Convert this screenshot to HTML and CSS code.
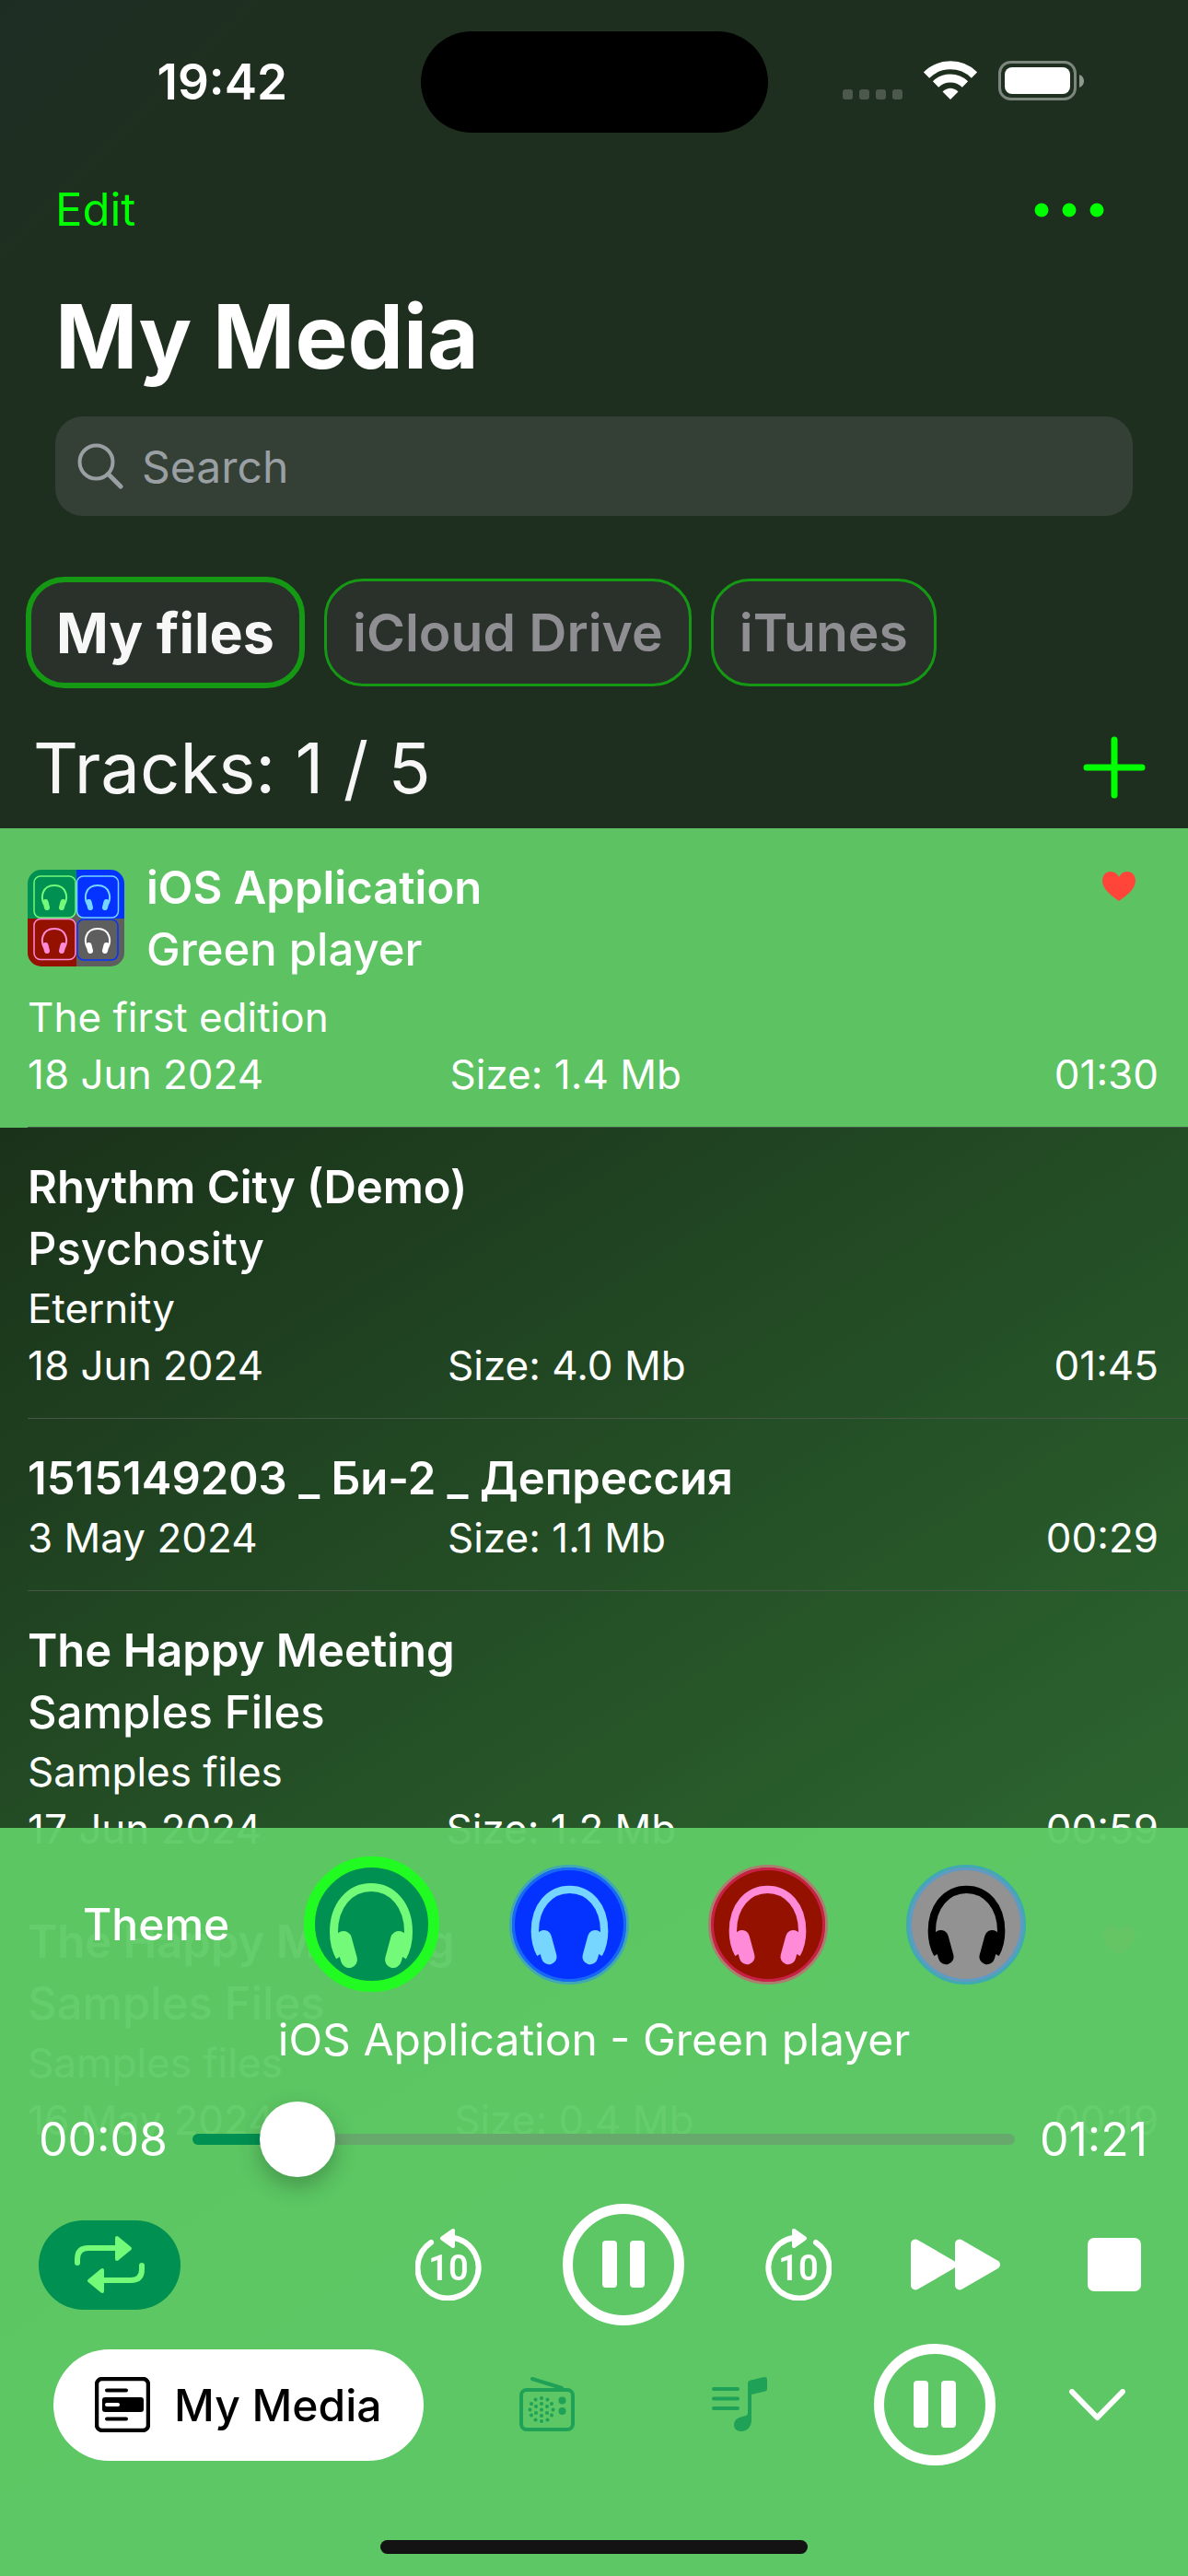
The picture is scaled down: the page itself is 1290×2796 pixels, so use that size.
FILE: index.html
```html
<!DOCTYPE html>
<html lang="en">
<head>
  <meta charset="UTF-8" />
  <meta name="viewport" content="width=device-width, initial-scale=1.0"/>
  <title>My Media</title>
  <link rel="stylesheet" href="styles.css">
</head>
<body>
  <!-- shared icons -->
  <svg class="sprite" aria-hidden="true">
    <symbol id="headphones" viewBox="-50 -50 100 100">
      <path d="M-34 35C-39 26-40.500 17-40.500 8C-40.500-21-23-40.500 0-40.500S40.500-21 40.500 8C40.500 17 39 26 34 35" fill="none" stroke="currentColor" stroke-width="9"/>
      <path d="M-30 16L-24 38M30 16L24 38" fill="none" stroke="currentColor" stroke-width="18" stroke-linecap="round"/>
    </symbol>
    <symbol id="phones-thin" viewBox="-15 -15 30 30">
      <path d="M-11 8C-15 1-14-13 0-13S15 1 11 8" fill="none" stroke="currentColor" stroke-width="2"/>
      <path d="M-9.500 5L-8 11M9.500 5L8 11" fill="none" stroke="currentColor" stroke-width="6" stroke-linecap="round"/>
    </symbol>
    <symbol id="heart" viewBox="0 0 36 33">
      <path d="M18 32C8 25 0 18 0 10C0 4 4 0 9 0C13 0 16 2 18 6C20 2 23 0 27 0C32 0 36 4 36 10C36 18 28 25 18 32Z" fill="currentColor"/>
    </symbol>
    <symbol id="pause" viewBox="0 0 132 132">
      <circle cx="66" cy="66" r="60.500" fill="none" stroke="currentColor" stroke-width="11"/>
      <rect x="43" y="40" width="16" height="51" rx="4" fill="currentColor"/>
      <rect x="73" y="40" width="16" height="51" rx="4" fill="currentColor"/>
    </symbol>
  </svg>

  <header class="header">
    <div class="status-bar">
      <span class="time">19:42</span>
      <span class="island"></span>
      <span class="status-icons">
        <svg width="65" height="43" viewBox="0 0 65 43" aria-hidden="true">
          <g fill="#fff" fill-opacity=".2">
            <rect x="0" y="31" width="11" height="11" rx="3"/>
            <rect x="18" y="31" width="11" height="11" rx="3"/>
            <rect x="36" y="31" width="11" height="11" rx="3"/>
            <rect x="54" y="31" width="11" height="11" rx="3"/>
          </g>
        </svg>
        <svg width="58" height="43" viewBox="0 0 58 43" aria-hidden="true">
          <path d="M3 15.500A37 37 0 0 1 55 15.500" fill="none" stroke="#fff" stroke-width="9"/>
          <path d="M13 25.500A23 23 0 0 1 45 25.500" fill="none" stroke="#fff" stroke-width="9"/>
          <path d="M20.500 33.500Q29 26 37.500 33.500L29 42Z" fill="#fff"/>
        </svg>
        <svg width="93" height="43" viewBox="0 0 93 43" aria-hidden="true">
          <rect x="1.500" y="1.500" width="82" height="40" rx="12" fill="none" stroke="#fff" stroke-opacity=".42" stroke-width="3"/>
          <rect x="7" y="7" width="71" height="29" rx="8" fill="#fff"/>
          <path d="M88 15Q93 17 93 22T88 29Z" fill="#fff" fill-opacity=".5"/>
        </svg>
      </span>
    </div>

    <div class="nav">
      <button class="edit">Edit</button>
      <button class="more" aria-label="More">
        <svg width="76" height="16" viewBox="0 0 76 16"><g fill="currentColor"><circle cx="8" cy="8" r="7.500"/><circle cx="38" cy="8" r="7.500"/><circle cx="68" cy="8" r="7.500"/></g></svg>
      </button>
    </div>

    <h1>My Media</h1>

    <label class="search">
      <svg width="50" height="50" viewBox="0 0 50 50" aria-hidden="true"><g fill="none" stroke="currentColor" stroke-width="4"><circle cx="20.500" cy="20.500" r="18"/><path d="M33.500 33.500L47 47" stroke-width="5" stroke-linecap="round"/></g></svg>
      <input type="search" placeholder="Search" aria-label="Search">
    </label>

    <div class="chips">
      <button class="chip active">My files</button>
      <button class="chip">iCloud Drive</button>
      <button class="chip">iTunes</button>
    </div>

    <div class="tracks-bar">
      <h2>Tracks: 1 / 5</h2>
      <button class="add" aria-label="Add">
        <svg width="68" height="68" viewBox="0 0 68 68"><path d="M34 4V64M4 34H64" stroke="currentColor" stroke-width="7" stroke-linecap="round"/></svg>
      </button>
    </div>
  </header>

  <ul class="tracks">
    <li class="track playing">
      <div class="track-head">
        <svg class="art" viewBox="0 0 105 105" aria-hidden="true">
          <rect width="53" height="53" fill="#009051"/>
          <rect x="53" width="52" height="53" fill="#0433ff"/>
          <rect y="53" width="53" height="52" fill="#941100"/>
          <rect x="53" y="53" width="52" height="52" fill="#5e5e5e"/>
          <path d="M47 53L53 47L59 53L53 59Z" fill="#5e5e5e"/>
          <g fill="none" stroke-width="1.500">
            <rect x="7" y="7" width="45" height="45" rx="7" fill="#009051" stroke="#73fa79"/>
            <rect x="53.500" y="7" width="45" height="45" rx="7" fill="#0433ff" stroke="#76d6ff"/>
            <rect x="7" y="53.500" width="45" height="44" rx="7" fill="#941100" stroke="#ff8ad8"/>
            <rect x="54" y="54" width="44" height="44" rx="7" stroke="#0433ff"/>
          </g>
          <use href="#phones-thin" x="14" y="15" width="30" height="30" color="#73fa79"/>
          <use href="#phones-thin" x="61" y="15" width="30" height="30" color="#76d6ff"/>
          <use href="#phones-thin" x="14" y="62" width="30" height="30" color="#ff8ad8"/>
          <use href="#phones-thin" x="61" y="62" width="30" height="30" color="#fff"/>
        </svg>
        <div class="names">
          <p class="title">iOS Application</p>
          <p class="artist">Green player</p>
        </div>
        <svg class="heart" aria-label="Favourite"><use href="#heart"/></svg>
      </div>
      <p class="album">The first edition</p>
      <p class="meta"><span>18 Jun 2024</span><span>Size: 1.4 Mb</span><span>01:30</span></p>
    </li>
    <li class="track">
      <p class="title">Rhythm City (Demo)</p>
      <p class="artist">Psychosity</p>
      <p class="album">Eternity</p>
      <p class="meta"><span>18 Jun 2024</span><span>Size: 4.0 Mb</span><span>01:45</span></p>
    </li>
    <li class="track">
      <p class="title">1515149203 _ Би-2 _ Депрессия</p>
      <p class="meta"><span>3 May 2024</span><span>Size: 1.1 Mb</span><span>00:29</span></p>
    </li>
    <li class="track">
      <p class="title">The Happy Meeting</p>
      <p class="artist">Samples Files</p>
      <p class="album">Samples files</p>
      <p class="meta"><span>17 Jun 2024</span><span>Size: 1.2 Mb</span><span>00:59</span></p>
    </li>
    <li class="track">
      <div class="track-head">
        <div class="names">
          <p class="title">The Happy Meeting</p>
          <p class="artist">Samples Files</p>
        </div>
        <svg class="heart" aria-label="Favourite"><use href="#heart"/></svg>
      </div>
      <p class="album">Samples files</p>
      <p class="meta"><span>16 May 2024</span><span>Size: 0.4 Mb</span><span>00:19</span></p>
    </li>
  </ul>

  <footer class="player">
    <div class="themes" role="radiogroup" aria-labelledby="theme-label">
      <span id="theme-label">Theme</span>
      <label class="theme green"><input type="radio" name="theme" aria-label="Green" checked><svg><use href="#headphones"/></svg></label>
      <label class="theme blue"><input type="radio" name="theme" aria-label="Blue"><svg><use href="#headphones"/></svg></label>
      <label class="theme red"><input type="radio" name="theme" aria-label="Red"><svg><use href="#headphones"/></svg></label>
      <label class="theme gray"><input type="radio" name="theme" aria-label="Gray"><svg><use href="#headphones"/></svg></label>
    </div>

    <p class="now-playing">iOS Application - Green player</p>

    <div class="progress">
      <span>00:08</span>
      <input type="range" min="0" max="89" value="8" aria-label="Position">
      <span>01:21</span>
    </div>

    <div class="controls">
      <button class="repeat" aria-label="Repeat">
        <svg width="76" height="64" viewBox="0 0 76 64">
          <g fill="none" stroke="currentColor" stroke-width="6" stroke-linecap="round"><path d="M3 30V26Q3 14 15 14H46"/><path d="M73 33V37Q73 49 61 49H30"/></g>
          <g fill="currentColor" stroke="currentColor" stroke-width="4" stroke-linejoin="round"><path d="M46 3V26L60 14.500Z"/><path d="M30 38V61L16 49.500Z"/></g>
        </svg>
      </button>
      <button class="skip" aria-label="Back 10 seconds">
        <svg width="72" height="78" viewBox="0 0 72 78">
          <path d="M17 15A33 33 0 1 0 42 10" fill="none" stroke="currentColor" stroke-width="6" stroke-linecap="round"/>
          <path d="M41 2V19L29 10.500Z" fill="currentColor" stroke="currentColor" stroke-width="4" stroke-linejoin="round"/>
          <text x="36" y="56" text-anchor="middle">10</text>
        </svg>
      </button>
      <button class="play" aria-label="Pause"><svg width="132" height="132"><use href="#pause"/></svg></button>
      <button class="skip" aria-label="Forward 10 seconds">
        <svg width="72" height="78" viewBox="0 0 72 78">
          <path d="M55 15A33 33 0 1 1 30 10" fill="none" stroke="currentColor" stroke-width="6" stroke-linecap="round"/>
          <path d="M31 2V19L43 10.500Z" fill="currentColor" stroke="currentColor" stroke-width="4" stroke-linejoin="round"/>
          <text x="36" y="56" text-anchor="middle">10</text>
        </svg>
      </button>
      <button aria-label="Next">
        <svg width="106" height="56" viewBox="0 0 106 56"><g fill="currentColor" stroke="currentColor" stroke-width="10" stroke-linejoin="round"><path d="M5 5.500V50.500L44 28Z"/><path d="M53 5.500V50.500L92 28Z"/></g></svg>
      </button>
      <button aria-label="Stop">
        <svg width="58" height="58" viewBox="0 0 58 58"><rect width="58" height="58" rx="7" fill="currentColor"/></svg>
      </button>
    </div>

    <div class="tabs">
      <button class="tab-active">
        <svg width="60" height="60" viewBox="0 0 60 60" aria-hidden="true">
          <rect x="2" y="2" width="56" height="56" rx="6" fill="none" stroke="currentColor" stroke-width="4.500"/>
          <rect x="8" y="22" width="45" height="16" rx="3" fill="currentColor"/>
          <path d="M13 14.500H34M13 45.500H34" stroke="currentColor" stroke-width="4" stroke-linecap="round"/>
          <path d="M13 30H25" stroke="#fff" stroke-width="4" stroke-linecap="round"/>
        </svg>
        My Media
      </button>
      <nav class="tab-icons">
        <button aria-label="Radio">
          <svg width="60" height="60" viewBox="0 0 60 60">
            <rect x="2" y="14" width="56" height="43" rx="6" fill="none" stroke="currentColor" stroke-width="4"/>
            <path d="M14 2L46 12" stroke="currentColor" stroke-width="4" stroke-linecap="round"/>
            <g fill="currentColor">
              <circle cx="46.500" cy="25.500" r="4"/><circle cx="46.500" cy="37" r="4"/>
              <circle cx="24" cy="23" r="2"/><circle cx="24" cy="29" r="2"/><circle cx="24" cy="35.500" r="2"/><circle cx="24" cy="42" r="2"/><circle cx="24" cy="48" r="2"/>
              <circle cx="18" cy="32" r="2"/><circle cx="18" cy="39" r="2"/><circle cx="30" cy="32" r="2"/><circle cx="30" cy="39" r="2"/>
              <circle cx="17.500" cy="24.500" r="2"/><circle cx="30.500" cy="24.500" r="2"/><circle cx="17.500" cy="46.500" r="2"/><circle cx="30.500" cy="46.500" r="2"/>
              <circle cx="13" cy="29" r="2"/><circle cx="35" cy="29" r="2"/><circle cx="11.500" cy="35.500" r="2"/><circle cx="36.500" cy="35.500" r="2"/><circle cx="13" cy="41.500" r="2"/><circle cx="35" cy="41.500" r="2"/>
            </g>
          </svg>
        </button>
        <button aria-label="Playlist">
          <svg width="60" height="60" viewBox="0 0 60 60">
            <path d="M2 13H28M2 23.500H28M2 34H28" stroke="currentColor" stroke-width="4" stroke-linecap="round"/>
            <path d="M39 7Q39 4 42 3.500L57 0Q60 0 60 3V13Q60 15 58 15.500L43 19V47C43 54 38 59 32 59C27 59 24 56 24 52C24 47 28 44 33 43L37 42Q39 41.500 39 39Z" fill="currentColor"/>
          </svg>
        </button>
      </nav>
      <button aria-label="Pause"><svg width="132" height="132"><use href="#pause"/></svg></button>
      <button class="collapse" aria-label="Collapse">
        <svg width="61" height="35" viewBox="0 0 61 35"><path d="M3 3L30.500 31L58 3" fill="none" stroke="currentColor" stroke-width="6" stroke-linecap="round" stroke-linejoin="round"/></svg>
      </button>
    </div>

    <div class="home-bar"></div>
  </footer>
</body>
</html>
```
FILE: styles.css
```css
:root {
  --header-bg: #1f2f1f;
  --accent: #00ff00;
  --player: rgba(95, 203, 102, 0.96);
  --row-active: #5cc262;
  --green: #009051;
  --light-green: #73fa79;
}

* {
  box-sizing: border-box;
}

body {
  margin: 0;
  height: 100vh;
  overflow: hidden;
  font-family: Inter, "Liberation Sans", sans-serif;
  color: #fff;
  background: linear-gradient(148deg, #1a321a 34%, #2c652f 77%);
}

h1, h2, p, ul {
  margin: 0;
  padding: 0;
}

button {
  padding: 0;
  border: none;
  background: none;
  color: inherit;
  font: inherit;
  cursor: pointer;
}

svg {
  display: block;
  flex: none;
}

.sprite {
  position: absolute;
  width: 0;
  height: 0;
}

/* header */
.header {
  background: linear-gradient(135deg, #1e2d24, var(--header-bg) 15%);
}

.status-bar {
  display: grid;
  grid-template-columns: 1fr 377px 1fr;
  align-items: center;
  padding-top: 34px;
}

.time {
  justify-self: center;
  padding-left: 26px;
  font-size: 53px;
  line-height: 60px;
  font-weight: 600;
}

.island {
  height: 110px;
  border-radius: 55px;
  background: #000;
}

.status-icons {
  justify-self: end;
  display: flex;
  gap: 23px;
  padding: 0 113px 4px 0;
}

.nav {
  display: flex;
  justify-content: space-between;
  align-items: center;
  margin-top: 52px;
  padding: 0 91px 0 60px;
  color: var(--accent);
}

.edit {
  font-size: 49px;
  line-height: 64px;
}

h1 {
  margin-top: 45px;
  padding: 0 60px;
  font-size: 96px;
  font-weight: 700;
  line-height: 120px;
}

.search {
  display: flex;
  align-items: center;
  gap: 20px;
  height: 108px;
  margin: 27px 60px 0;
  padding: 0 24px;
  border-radius: 30px;
  background: #344036;
  color: #9a9fa3;
}

.search input {
  flex: 1;
  min-width: 0;
  border: none;
  outline: none;
  padding: 0;
  background: none;
  color: #fff;
  font: 48px Inter, sans-serif;
}

.search input::placeholder {
  color: #9a9fa3;
}

.chips {
  display: flex;
  align-items: center;
  gap: 21px;
  margin-top: 66px;
  padding: 0 28px;
}

.chip {
  height: 117px;
  padding: 0 28px;
  border: 3px solid #159915;
  border-radius: 42px;
  background: #29312a;
  color: #8e8e93;
  font-size: 57px;
  font-weight: 600;
}

.chip.active {
  height: 121px;
  padding: 0 27px;
  border-width: 6px;
  color: #f7f7f7;
  font-size: 61px;
  font-weight: 700;
}

.tracks-bar {
  display: flex;
  justify-content: space-between;
  align-items: center;
  margin-top: 36px;
  padding: 0 46px 16px 36px;
}

h2 {
  color: #f7f7f7;
  font-size: 76px;
  font-weight: 400;
  line-height: 100px;
}

.add {
  color: var(--accent);
}

/* track list */
.tracks {
  list-style: none;
}

.track {
  position: relative;
  padding: 31px 32px 27px 30px;
}

.track::after {
  content: "";
  position: absolute;
  left: 30px;
  right: 0;
  bottom: 0;
  height: 1px;
  background: #48564a;
}

.playing {
  background: var(--row-active);
}

.track-head {
  display: flex;
  align-items: flex-start;
}

.names {
  flex: 1;
}

.art {
  width: 105px;
  height: 105px;
  margin: 14px 24px 24px 0;
  border-radius: 15px;
}

.heart {
  width: 36px;
  height: 33px;
  margin: 16px 25px 0 0;
  color: #ff453a;
}

.title,
.artist {
  font-size: 49px;
  font-weight: 600;
  line-height: 67px;
}

.artist {
  font-weight: 500;
}

.album,
.meta {
  font-size: 44px;
  line-height: 62px;
}

/* the size sits a third of the way between date and duration */
.meta {
  display: grid;
  grid-template-columns: auto 1fr auto 2fr auto;
}

.meta span:nth-child(2) {
  grid-column: 3;
}

.meta span:nth-child(3) {
  grid-column: 5;
}

/* player */
.player {
  position: fixed;
  left: 0;
  right: 0;
  bottom: 0;
  padding: 31px 0 24px;
  background: var(--player);
}

.themes {
  display: grid;
  grid-template-columns: 205fr repeat(4, 215fr);
  align-items: center;
  height: 147px;
  padding: 0 133px 0 90px;
  font-size: 48px;
  font-weight: 500;
}

.theme {
  position: relative;
  justify-self: center;
  display: flex;
  align-items: center;
  justify-content: center;
  width: 130px;
  height: 130px;
  border: 3px solid;
  border-radius: 50%;
}

.theme input {
  position: absolute;
  inset: 0;
  margin: 0;
  appearance: none;
}

.theme svg {
  width: 93px;
  height: 93px;
}

.theme.green {
  width: 147px;
  height: 147px;
  border: 12px solid #22fb22;
  background: var(--green);
}

.theme.green svg {
  width: 100px;
  height: 100px;
  color: var(--light-green);
}

.theme.blue {
  border-color: #40a9b4;
  background: #0433ff;
  box-shadow: inset 0 0 0 3px #1769f5;
}

.theme.blue svg {
  color: #76d6ff;
}

.theme.red {
  border-color: #ac7e70;
  background: #941100;
  box-shadow: inset 0 0 0 3px #ca1f46;
}

.theme.red svg {
  color: #ff8ad8;
}

.theme.gray {
  border-color: #3fa9b4;
  background: #929292;
  box-shadow: inset 0 0 0 3px #5b9bc5;
}

.theme.gray svg {
  color: #000;
}

.now-playing {
  margin-top: 21px;
  font-size: 48px;
  line-height: 62px;
  text-align: center;
}

.progress {
  display: flex;
  align-items: center;
  gap: 27px;
  margin-top: 36px;
  padding: 0 44px 0 42px;
  font-size: 50px;
}

.progress input {
  flex: 1;
  min-width: 0;
  height: 82px;
  margin: 0;
  appearance: none;
  background: none;
}

.progress input::-webkit-slider-runnable-track {
  height: 12px;
  border-radius: 6px;
  background: linear-gradient(to right, var(--green) 12%, #67a96d 12%);
}

.progress input::-webkit-slider-thumb {
  appearance: none;
  width: 82px;
  height: 82px;
  margin-top: -35px;
  border-radius: 50%;
  background: #fff;
  box-shadow: 0 10px 24px rgba(0, 0, 0, 0.25);
}

.controls {
  display: flex;
  align-items: center;
  gap: 86px;
  margin-top: 29px;
  padding: 0 51px 0 42px;
}

.repeat {
  display: flex;
  align-items: center;
  justify-content: center;
  width: 154px;
  height: 97px;
  margin-right: auto;
  border-radius: 49px;
  background: var(--green);
  color: var(--light-green);
}

.play {
  padding: 0 2px;
}

.skip text {
  fill: currentColor;
  font: 600 38px Roboto, sans-serif;
}

.tabs {
  display: flex;
  align-items: center;
  margin-top: 20px;
  padding: 0 68px 0 58px;
}

.tab-active {
  display: flex;
  align-items: center;
  gap: 26px;
  height: 121px;
  padding: 0 45px;
  border-radius: 61px;
  background: #fff;
  color: #000;
  font-size: 48px;
  font-weight: 500;
}

.tab-icons {
  flex: 1;
  display: flex;
  justify-content: space-around;
  margin: 0 41px 0 30px;
  color: #1fa158;
}

.collapse {
  margin-left: 80px;
}

.home-bar {
  width: 36%;
  height: 15px;
  margin: 81px auto 0;
  border-radius: 8px;
  background: #131313;
}
```
